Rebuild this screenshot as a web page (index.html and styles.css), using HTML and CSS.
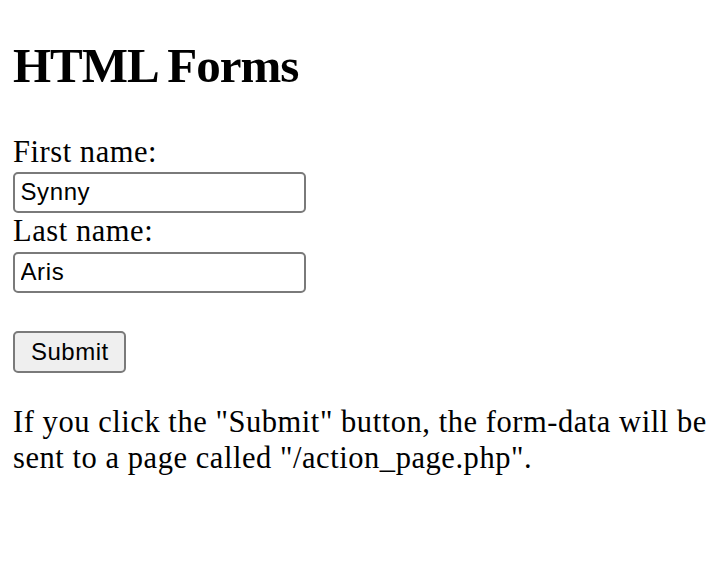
FILE: index.html
```html
<!DOCTYPE html>
<html>
<head>
<meta charset="utf-8">
<link rel="stylesheet" href="styles.css">
</head>
<body>
<h1 class="title">HTML Forms</h1>
<form class="form" action="/action_page.php">
  <label class="label" for="fname">First name:</label>
  <input class="field field-first" type="text" id="fname" name="fname" value="Synny">
  <label class="label label-second" for="lname">Last name:</label>
  <input class="field field-second" type="text" id="lname" name="lname" value="Aris">
  <input class="submit" type="submit" value="Submit">
</form>
<p class="note">If you click the "Submit" button, the form-data will be sent to a page called "/action_page.php".</p>
</body>
</html>
```

FILE: styles.css
```css
html, body {
  background: #ffffff;
}
body {
  margin: 0;
  padding: 0 13px;
  font-family: "Liberation Serif", "Times New Roman", serif;
  font-size: 30.5px;
  letter-spacing: 0.55px;
  color: #000000;
}
.title {
  margin: 35.2px 0 0;
  font-size: 49px;
  line-height: 62px;
  letter-spacing: -1px;
  font-weight: bold;
}
.form {
  display: flex;
  flex-direction: column;
  align-items: flex-start;
  margin-top: 39.5px;
}
.label {
  display: block;
  line-height: 31px;
}
.label-second {
  margin-top: 3.6px;
}
.field {
  box-sizing: border-box;
  width: 293px;
  height: 41px;
  margin: 0;
  padding: 0 5.5px;
  border: 2px solid #7a7a7a;
  border-radius: 5px;
  background: #ffffff;
  font-family: "Liberation Sans", Arial, sans-serif;
  font-size: 24px;
  letter-spacing: 0.6px;
  color: #000000;
  outline: none;
}
.field-first {
  margin-top: 4px;
}
.field-second {
  margin-top: 4.6px;
}
.submit {
  box-sizing: border-box;
  height: 42px;
  margin: 37.7px 0 0;
  padding: 0 15.5px 0 16px;
  border: 2px solid #7a7a7a;
  border-radius: 5px;
  background: #efefef;
  font-family: "Liberation Sans", Arial, sans-serif;
  font-size: 24px;
  letter-spacing: 0.5px;
  color: #000000;
}
.note {
  margin: 31.5px 0 0;
  line-height: 36px;
}
```
